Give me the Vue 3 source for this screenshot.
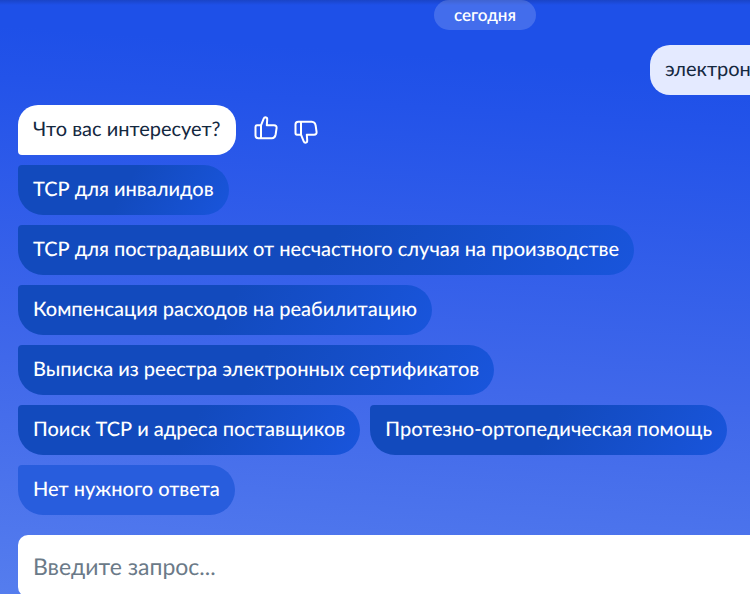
<script setup>
import { ref } from "vue";

const query = ref("");

const answers = [
  { text: "ТСР для инвалидов" },
  { text: "ТСР для пострадавших от несчастного случая на производстве" },
  { text: "Компенсация расходов на реабилитацию" },
  { text: "Выписка из реестра электронных сертификатов" },
  { text: "Поиск ТСР и адреса поставщиков" },
  { text: "Протезно-ортопедическая помощь" },
  { text: "Нет нужного ответа", light: true },
];
</script>

<template>
  <main class="page">
    <div class="chat">
      <div class="date">сегодня</div>
      <p class="message user">электронный сертификат</p>
      <div class="bot">
        <p class="message question">Что вас интересует?</p>
        <div class="rates">
          <button class="rate" type="button" aria-label="Полезно">
            <svg viewBox="0 0 24 24">
              <path d="M1.5 11 Q1.5 9.3 3 9.3 H7 L9.6 2.8 Q10.2 1.2 11.5 1.2 Q13.4 1.5 13.2 3.6 L12.8 9.3 H20 Q22.8 9.4 22.6 11.8 L21.7 18.2 Q21 22 17.8 22.2 H4.3 Q1.5 22.2 1.5 19.5 Z M7 9.3 V22.2" />
            </svg>
          </button>
          <button class="rate down" type="button" aria-label="Бесполезно">
            <svg viewBox="0 0 24 24">
              <path d="M1.5 11 Q1.5 9.3 3 9.3 H7 L9.6 2.8 Q10.2 1.2 11.5 1.2 Q13.4 1.5 13.2 3.6 L12.8 9.3 H20 Q22.8 9.4 22.6 11.8 L21.7 18.2 Q21 22 17.8 22.2 H4.3 Q1.5 22.2 1.5 19.5 Z M7 9.3 V22.2" />
            </svg>
          </button>
        </div>
      </div>
      <div class="answers">
        <button
          v-for="answer in answers"
          :key="answer.text"
          type="button"
          class="answer"
          :class="{ light: answer.light }"
        >
          {{ answer.text }}
        </button>
      </div>
      <form class="form" @submit.prevent>
        <input v-model="query" type="text" placeholder="Введите запрос..." aria-label="Введите запрос" />
      </form>
    </div>
  </main>
</template>

<style>
body {
  margin: 0;
}
</style>

<style scoped>
.page {
  min-height: 100vh;
  overflow: hidden;
  background: linear-gradient(to bottom, rgba(20, 50, 150, 0.4), transparent 5px),
    linear-gradient(184deg, #1e50e8 12%, #2353e9 20%, #4068ea 63%, #557dee 100%);
  font-family: Lato, "Open Sans", sans-serif;
  font-size: 20px;
  line-height: 24px;
  text-rendering: geometricPrecision;
}

/* the chat is wider than the window, its right side is cut off */
.chat {
  display: flex;
  flex-direction: column;
  box-sizing: border-box;
  width: calc(100% + 220px);
  padding: 0 18px;
}

.date {
  align-self: center;
  padding: 3px 20px;
  border-radius: 15px;
  background: rgba(255, 255, 255, 0.17);
  color: #fff;
  font-size: 17px;
  font-weight: 600;
}

.message {
  margin: 0;
  padding: 12px 15px 14px;
  color: #14283f;
}

.user {
  box-sizing: border-box;
  align-self: flex-end;
  width: 302px;
  margin-top: 15px;
  border-radius: 20px 20px 4px 20px;
  background: #e4eaff;
}

.bot {
  display: flex;
  align-items: center;
  gap: 18px;
  margin-top: 10px;
}

.question {
  border-radius: 20px 20px 20px 4px;
  background: #fff;
}

.rates {
  display: flex;
  align-items: flex-start;
  gap: 16px;
}

.rate {
  padding: 0 0 4px;
  border: none;
  background: none;
  cursor: pointer;
}

.rate svg {
  display: block;
  width: 24px;
  height: 24px;
  fill: none;
  stroke: #fff;
  stroke-width: 2;
  stroke-linejoin: round;
}

.down {
  padding: 4px 0 0;
}

.down svg {
  transform: scaleY(-1);
}

.answers {
  display: flex;
  flex-wrap: wrap;
  gap: 10px;
  margin: 10px 220px 20px 0;
}

.answer {
  padding: 12px 15px 14px;
  border: none;
  border-radius: 4px 25px 25px 25px;
  background: linear-gradient(120deg, #124abd 50%, #1955dc);
  color: #fff;
  font: inherit;
  font-weight: 500;
  text-rendering: inherit;
  cursor: pointer;
}

.light {
  background: #285ddd;
}

.form input {
  box-sizing: border-box;
  width: 100%;
  padding: 17px 15px;
  border: none;
  border-radius: 10px;
  outline: none;
  background: #fff;
  color: #14283f;
  font: inherit;
  font-size: 23px;
  line-height: 28px;
  text-rendering: inherit;
}

.form input::placeholder {
  color: #6b7a88;
  opacity: 1;
}
</style>
